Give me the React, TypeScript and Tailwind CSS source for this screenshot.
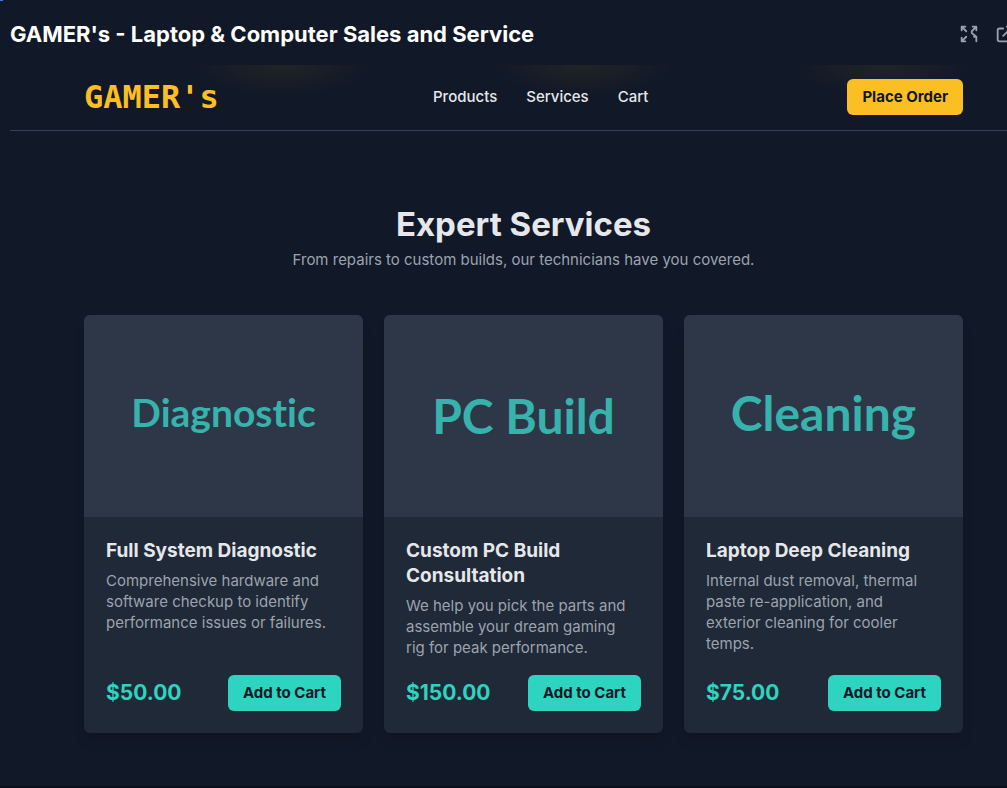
type Service = {
  id: number;
  label: string;
  labelClass: string;
  name: string;
  description: string;
  price: number;
};

const services: Service[] = [
  {
    id: 1,
    label: "Diagnostic",
    labelClass: "pb-[7px] text-[39px]",
    name: "Full System Diagnostic",
    description:
      "Comprehensive hardware and software checkup to identify performance issues or failures.",
    price: 50,
  },
  {
    id: 2,
    label: "PC Build",
    labelClass: "text-[48px]",
    name: "Custom PC Build Consultation",
    description:
      "We help you pick the parts and assemble your dream gaming rig for peak performance.",
    price: 150,
  },
  {
    id: 3,
    label: "Cleaning",
    labelClass: "pb-[7px] text-[48px]",
    name: "Laptop Deep Cleaning",
    description:
      "Internal dust removal, thermal paste re-application, and exterior cleaning for cooler temps.",
    price: 75,
  },
];

const navLinks = ["Products", "Services", "Cart"];

const iconProps = {
  className: "size-[22px]",
  viewBox: "0 0 24 24",
  fill: "none",
  stroke: "currentColor",
  strokeWidth: 2,
  strokeLinecap: "round",
  strokeLinejoin: "round",
} as const;

const TitleBar = () => (
  <div className="flex h-[65px] items-center justify-between pt-[3px] pr-[21px]">
    <h1 className="text-[22px] leading-7 font-bold text-white">
      GAMER's - Laptop &amp; Computer Sales and Service
    </h1>
    <div className="flex gap-[14px] text-gray-400">
      <button type="button" aria-label="Full screen" className="cursor-pointer">
        <svg {...iconProps}>
          <path d="M4 8V4h4M4 4l5 5M16 4h4v4M20 4l-5 5v2l5 4v5M17.5 15H20M4 16v4h4M4 20l5-5" />
        </svg>
      </button>
      <button type="button" aria-label="Open in new tab" className="cursor-pointer">
        <svg {...iconProps}>
          <path d="M10 6H6a2 2 0 00-2 2v10a2 2 0 002 2h10a2 2 0 002-2v-4M14 4h6m0 0v6m0-6L10 14" />
        </svg>
      </button>
    </div>
  </div>
);

const Header = () => (
  <header className="border-b border-gray-700 bg-[radial-gradient(90px_30px_at_26.5%_0,#fbbf2412,transparent),radial-gradient(90px_30px_at_55.8%_0,#fbbf2412,transparent),radial-gradient(90px_30px_at_85%_0,#fbbf2412,transparent)]">
    <div className="mx-auto flex h-[65px] max-w-[879px] items-center justify-between pb-px">
      <a
        href="#home"
        className="w-[150px] font-['DejaVu_Sans_Mono','Liberation_Mono',monospace] text-[32px] leading-9 font-bold text-[#fbbf24]"
      >
        GAMER's
      </a>
      <nav className="flex gap-[29px] text-[15px] font-medium text-gray-200">
        {navLinks.map((link) => (
          <a key={link} href={`#${link.toLowerCase()}`}>
            {link}
          </a>
        ))}
      </nav>
      <button
        type="button"
        className="h-9 cursor-pointer rounded-md bg-[#fbbf24] px-[15px] text-[15px] font-bold text-gray-900"
      >
        Place Order
      </button>
    </div>
  </header>
);

const ServiceCard = ({ service }: { service: Service }) => (
  <article className="flex flex-col overflow-hidden rounded-md bg-[#1f2937] shadow-lg">
    <div
      className={`flex h-[202px] items-center justify-center bg-[#2d3748] font-[Lato,sans-serif] font-bold text-[#38b2ac] [font-variant-ligatures:none] ${service.labelClass}`}
    >
      {service.label}
    </div>
    <div className="flex grow flex-col px-[22px] pt-[21px] pb-[22px]">
      <h3 className="text-[19px] leading-[25px] font-bold text-[#e5e7eb]">
        {service.name}
      </h3>
      <p className="mt-[7px] pr-2 text-[15px] leading-[21px] text-[#9ca3af]">
        {service.description}
      </p>
      <div className="mt-auto flex items-center justify-between pt-[17px]">
        <span className="text-[21px] font-bold text-[#2dd4bf]">
          ${service.price.toFixed(2)}
        </span>
        <button
          type="button"
          className="h-9 cursor-pointer rounded-md bg-[#2dd4bf] px-[15px] text-[15px] font-bold text-gray-900"
        >
          Add to Cart
        </button>
      </div>
    </div>
  </article>
);

const App = () => {
  return (
    <div className="relative min-h-screen overflow-hidden bg-[#111827] font-[Inter,sans-serif]">
      <span className="absolute top-0 left-0 h-px w-[3px] bg-blue-500" />
      <div className="-mr-[30px] ml-[10px]">
        <TitleBar />
        <Header />
        <main className="mx-auto max-w-[879px] pt-[71px] pb-[53px]">
          <div className="mb-11 text-center">
            <h2 className="text-[33px] leading-[44px] font-bold text-[#e5e7eb]">
              Expert Services
            </h2>
            <p className="mt-[2px] text-[15px] leading-[23px] text-[#9ca3af]">
              From repairs to custom builds, our technicians have you covered.
            </p>
          </div>
          <div className="grid grid-cols-3 gap-[21px]">
            {services.map((service) => (
              <ServiceCard key={service.id} service={service} />
            ))}
          </div>
        </main>
      </div>
      <footer className="h-[2px] bg-[#0b0f19]" />
    </div>
  );
};

export default App;
